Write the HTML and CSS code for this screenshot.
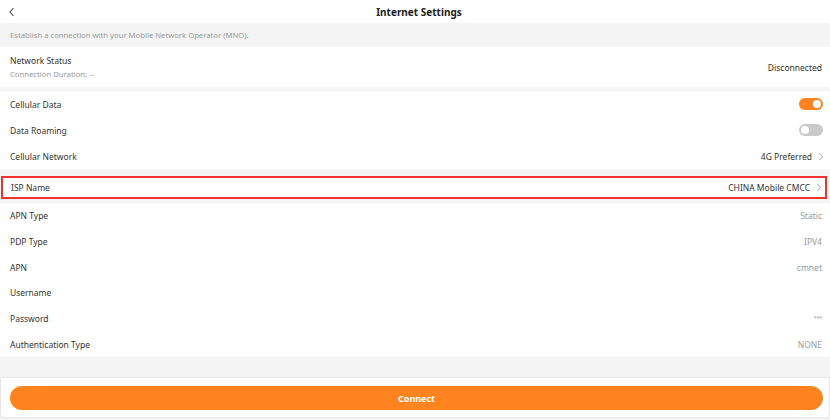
FILE: index.html
```html
<!DOCTYPE html>
<html>
<head>
<meta charset="utf-8">
<link rel="stylesheet" href="styles.css">
</head>
<body>
<div class="page">
  <header class="header">
    <svg class="back" width="8" height="10" viewBox="0 0 8 10"><path d="M5.5 1 L2 5 L5.5 9" fill="none" stroke="#444" stroke-width="1.1"/></svg>
    <div class="title">Internet Settings</div>
  </header>
  <div class="desc">Establish a connection with your Mobile Network Operator (MNO).</div>
  <section class="status">
    <div class="status-left">
      <div class="label">Network Status</div>
      <div class="sub">Connection Duration: --</div>
    </div>
    <div class="value dark">Disconnected</div>
  </section>
  <section class="group group-cell">
    <div class="row"><span class="label">Cellular Data</span><span class="toggle on"></span></div>
    <div class="row"><span class="label">Data Roaming</span><span class="toggle"></span></div>
    <div class="row"><span class="label">Cellular Network</span><span class="value dark">4G Preferred<svg class="chev" width="6" height="9" viewBox="0 0 6 9"><path d="M1.5 1 L4.5 4.5 L1.5 8" fill="none" stroke="#999" stroke-width="0.9"/></svg></span></div>
  </section>
  <section class="isp">
    <span class="label">ISP Name</span><span class="value dark">CHINA Mobile CMCC<svg class="chev" width="6" height="9" viewBox="0 0 6 9"><path d="M1.5 1 L4.5 4.5 L1.5 8" fill="none" stroke="#999" stroke-width="0.9"/></svg></span>
  </section>
  <section class="group group-apn">
    <div class="row"><span class="label">APN Type</span><span class="value">Static</span></div>
    <div class="row"><span class="label">PDP Type</span><span class="value">IPV4</span></div>
    <div class="row"><span class="label">APN</span><span class="value">cmnet</span></div>
    <div class="row"><span class="label">Username</span><span class="value"></span></div>
    <div class="row"><span class="label">Password</span><span class="value pw">***</span></div>
    <div class="row"><span class="label">Authentication Type</span><span class="value">NONE</span></div>
  </section>
  <div class="spacer"></div>
  <footer class="footer">
    <button class="connect">Connect</button>
  </footer>
</div>
</body>
</html>
```
FILE: styles.css
```css
html, body {
  margin: 0;
  padding: 0;
}
body {
  background: #f4f4f4;
  font-family: "Noto Sans", "Open Sans", sans-serif;
  color: #333;
  width: 830px;
  height: 420px;
  overflow: hidden;
}
.page {
  display: flex;
  flex-direction: column;
  height: 420px;
}
.header {
  height: 23px;
  background: #fff;
  display: flex;
  align-items: center;
  justify-content: center;
  position: relative;
}
.back {
  position: absolute;
  left: 8px;
  top: 7px;
}
.title {
  font-size: 10px;
  font-weight: 700;
  color: #222;
  margin-left: 8px;
}
.desc {
  height: 24px;
  line-height: 24px;
  padding-left: 10px;
  font-size: 7.7px;
  color: #9a9a9a;
}
.label {
  font-size: 8.5px;
  color: #333;
}
.value {
  font-size: 8.5px;
  color: #999;
  display: flex;
  align-items: center;
}
.value.dark {
  color: #333;
}
.chev {
  margin-left: 6px;
  margin-right: -2px;
}
.status {
  height: 40px;
  background: #fff;
  display: flex;
  align-items: center;
  justify-content: space-between;
  padding: 0 8px 0 10px;
  margin-bottom: 4px;
}
.status-left {
  display: flex;
  flex-direction: column;
  gap: 3px;
}
.sub {
  font-size: 7.7px;
  color: #9a9a9a;
}
.group {
  background: #fff;
  padding: 0 8px 0 10px;
}
.group-cell {
  margin-bottom: 7px;
}
.row {
  height: 26px;
  display: flex;
  align-items: center;
  justify-content: space-between;
}
.group-apn .row {
  height: 25.67px;
}
.toggle {
  width: 24px;
  height: 12px;
  border-radius: 6px;
  background: #c9c9c9;
  position: relative;
  margin-right: -1px;
}
.toggle::after {
  content: "";
  position: absolute;
  width: 8px;
  height: 8px;
  border-radius: 50%;
  background: #fff;
  top: 2px;
  left: 2px;
}
.toggle.on {
  background: #ff8320;
}
.toggle.on::after {
  left: 14px;
}
.isp {
  height: 23px;
  box-sizing: border-box;
  background: #fff;
  border: 2px solid #f0322c;
  margin: 0 3px 4px 1px;
  display: flex;
  align-items: center;
  justify-content: space-between;
  padding: 0 5px 0 8px;
}
.pw {
  font-size: 6px;
  letter-spacing: -0.5px;
}
.spacer {
  height: 20px;
}
.footer {
  height: 41px;
  box-sizing: border-box;
  background: #fff;
  border: 1px solid #e6e6e6;
  border-radius: 0 0 4px 4px;
  padding: 7px 6px 0 9px;
}
.connect {
  width: 100%;
  height: 24px;
  border: none;
  border-radius: 12px;
  background: #ff8420;
  color: #fff;
  font-family: "Noto Sans", sans-serif;
  font-size: 9px;
  font-weight: 700;
  padding: 0;
}
```
